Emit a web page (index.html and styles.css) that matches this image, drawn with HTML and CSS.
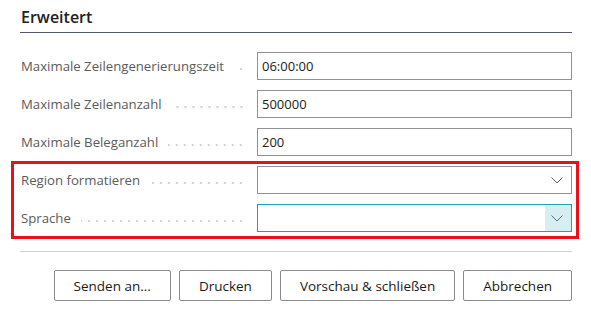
FILE: index.html
```html
<!DOCTYPE html>
<html lang="de">

	<head>
		<meta charset="UTF-8">
		<meta name="viewport" content="width=device-width, initial-scale=1.0">
		<title>Erweitert</title>
		<link rel="stylesheet" href="styles.css">
	</head>

	<body>

		<div class="page">
			<!-- Abschnitt -->
			<div class="section-title">Erweitert</div>

			<div class="fields">
				<div class="row">
					<div class="label"><span>Maximale Zeilengenerierungszeit</span><i class="dots"></i></div>
					<div class="input">06:00:00</div>
				</div>
				<div class="row">
					<div class="label"><span>Maximale Zeilenanzahl</span><i class="dots"></i></div>
					<div class="input">500000</div>
				</div>
				<div class="row">
					<div class="label"><span>Maximale Beleganzahl</span><i class="dots"></i></div>
					<div class="input">200</div>
				</div>

				<!-- markierter Bereich -->
				<div class="highlight">
					<div class="row">
						<div class="label"><span>Region formatieren</span><i class="dots"></i></div>
						<div class="input select">
							<span class="value"></span>
							<span class="arrow">
								<svg width="12" height="7" viewBox="0 0 12 7"><polyline points="0.5,0.5 6,6 11.5,0.5" fill="none" stroke="#5a5a5a" stroke-width="1"/></svg>
							</span>
						</div>
					</div>
					<div class="row">
						<div class="label"><span>Sprache</span><i class="dots"></i></div>
						<div class="input select focus">
							<span class="value"></span>
							<span class="arrow">
								<svg width="12" height="7" viewBox="0 0 12 7"><polyline points="0.5,0.5 6,6 11.5,0.5" fill="none" stroke="#56737a" stroke-width="1"/></svg>
							</span>
						</div>
					</div>
				</div>
			</div>

			<div class="footer">
				<button class="btn">Senden an...</button>
				<button class="btn">Drucken</button>
				<button class="btn">Vorschau &amp; schließen</button>
				<button class="btn">Abbrechen</button>
			</div>
		</div>

	</body>

</html>
```

FILE: styles.css
```css
body {
	font-family: "Open Sans", "Noto Sans", Arial, sans-serif;
	margin: 0;
	padding: 0;
	background-color: #ffffff;
	color: #212121;
}

.page {
	padding: 0 19px 0 20px;
}

.section-title {
	font-size: 16px;
	font-weight: 600;
	color: #212121;
	padding: 6px 0 0 1px;
	height: 26px;
	border-bottom: 1px solid #505c6d;
}

.fields {
	padding-top: 19px;
}

.row {
	display: flex;
	align-items: center;
	height: 28px;
	margin-bottom: 10px;
}

.label {
	width: 237px;
	display: flex;
	align-items: center;
	font-size: 13.2px;
	color: #5b5b5b;
	padding-left: 1px;
	box-sizing: border-box;
}

.label span {
	white-space: nowrap;
}

.dots {
	flex: 1;
	height: 4px;
	margin: 5px 12px 0 10px;
	background-image: radial-gradient(circle, #d2d2d2 0.9px, transparent 1.2px);
	background-size: 8px 4px;
	background-repeat: repeat-x;
	background-position: right center;
}

.input {
	flex: 1;
	height: 28px;
	border: 1px solid #8f9296;
	box-sizing: border-box;
	font-size: 13px;
	color: #212121;
	display: flex;
	align-items: center;
	padding-left: 4px;
}

.select {
	padding-left: 0;
}

.select .value {
	flex: 1;
}

.select .arrow {
	width: 26px;
	height: 100%;
	display: flex;
	align-items: center;
	justify-content: center;
}

.select .arrow svg {
	margin-left: -2px;
}

.select.focus {
	border-color: #1fa4ad;
}

.select.focus .arrow {
	background-color: #d6eef1;
}

.highlight {
	border: 3px solid #e8111c;
	margin: -5px -7px 0 -9px;
	padding: 2px 4px 0 6px;
}

.highlight .row:last-child {
	margin-bottom: 4px;
}

.footer {
	margin-top: 12px;
	border-top: 1px solid #d0d0d0;
	padding-top: 18px;
	display: flex;
	justify-content: flex-end;
	gap: 8px;
}

.btn {
	font-family: "Open Sans", "Noto Sans", Arial, sans-serif;
	font-size: 13.5px;
	font-weight: 400;
	color: #1a1a1a;
	background-color: #ffffff;
	border: 1px solid #8a8a8a;
	border-radius: 2px;
	height: 31px;
	padding: 0 19px;
}
```
